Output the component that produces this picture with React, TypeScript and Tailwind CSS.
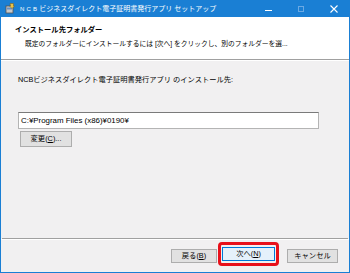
import React from "react";

const font = { fontFamily: "'Liberation Sans', 'Noto Sans CJK JP', sans-serif" };

function AppIcon() {
  return (
    <svg width="10" height="11" viewBox="0 0 10 11" className="shrink-0">
      <rect x="1" y="3" width="7" height="7" fill="#c8c8c8" stroke="#555" strokeWidth="0.8" />
      <rect x="2" y="4.5" width="5" height="2" fill="#6a8fbf" />
      <path d="M5 0.5 L8.5 0.5 L8.5 3 L9.5 3 L7 5.5 L4.5 3 L5.5 3 Z" fill="#e8c24a" stroke="#7a5a10" strokeWidth="0.5" />
    </svg>
  );
}

export default function App() {
  return (
    <div className="w-[350px] h-[273px] flex flex-col bg-[#1a7fd4] overflow-hidden" style={font}>
      {/* title bar */}
      <div className="h-[17px] flex items-center pl-[5px] text-white text-[7px] leading-none">
        <AppIcon />
        <span className="ml-[5px] tracking-[2.2px] text-[6px]">NCB</span>
        <span className="whitespace-nowrap">ビジネスダイレクト電子証明書発行アプリ セットアップ</span>
        <div className="ml-auto flex items-center h-full">
          <div className="w-[7px] h-[1px] bg-white mt-[3px] mr-[26px]" />
          <div className="w-[6px] h-[6px] border border-[#6aa9e4] mr-[26px]" />
          <svg width="8" height="8" viewBox="0 0 8 8" className="mr-[12px]">
            <path d="M0.5 0.5 L7.5 7.5 M7.5 0.5 L0.5 7.5" stroke="white" strokeWidth="1.1" />
          </svg>
        </div>
      </div>

      <div className="flex-1 mx-[1px] mb-[1px] bg-[#f1f0f1] flex flex-col">
        {/* header */}
        <div className="h-[42px] bg-white flex flex-col">
          <div className="pl-[14px] pt-[8px] text-[7.3px] leading-[9px] font-bold text-black">
            インストール先フォルダー
          </div>
          <div className="pl-[24px] pt-[5px] text-[6.75px] leading-[9px] text-black whitespace-nowrap">
            既定のフォルダーにインストールするには [次へ] をクリックし、別のフォルダーを選...
          </div>
        </div>
        <div className="h-[1px] bg-[#a0a0a0]" />
        <div className="h-[1px] bg-white" />

        {/* body */}
        <div className="flex-1 flex flex-col pl-[17px] pt-[14px]">
          <div className="text-[7.25px] leading-[10px] text-black whitespace-nowrap">
            NCBビジネスダイレクト電子証明書発行アプリ のインストール先:
          </div>
          <div className="mt-[27px] w-[301px] h-[17px] bg-white border border-[#b4b4b4] border-t-[#7a7a7a] flex items-center pl-[2px] text-[7.9px] text-black whitespace-nowrap">
            C:¥Program Files (x86)¥0190¥
          </div>
          <div className="mt-[2px] ml-[2px] w-[52px] h-[16px] bg-[#e1e1e1] border border-[#adadad] flex items-center justify-center text-[7.3px] text-black leading-none">
            変更(<span className="underline">C</span>)...
          </div>
        </div>

        <div className="h-[1px] bg-[#a0a0a0] mx-[1px]" />
        <div className="h-[1px] bg-white" />

        {/* footer */}
        <div className="h-[32px] flex items-start justify-end pr-[11px] pt-[2px]">
          <div className="mt-[7px] w-[46px] h-[14px] bg-[#e1e1e1] border border-[#adadad] flex items-center justify-center text-[7.3px] text-black leading-none">
            戻る(<span className="underline">B</span>)
          </div>
          <div className="ml-[1px] border-[3px] border-[#e8101a] rounded-[4px] px-[1px] py-[2px]">
            <div className="w-[53px] h-[14px] bg-[#e5f1fb] border border-[#0078d7] flex items-center justify-center text-[7.3px] text-black leading-none">
              次へ(<span className="underline">N</span>)
            </div>
          </div>
          <div className="ml-[8px] mt-[7px] w-[51px] h-[14px] bg-[#e1e1e1] border border-[#adadad] flex items-center justify-center text-[7.3px] text-black leading-none">
            キャンセル
          </div>
        </div>
      </div>
    </div>
  );
}
